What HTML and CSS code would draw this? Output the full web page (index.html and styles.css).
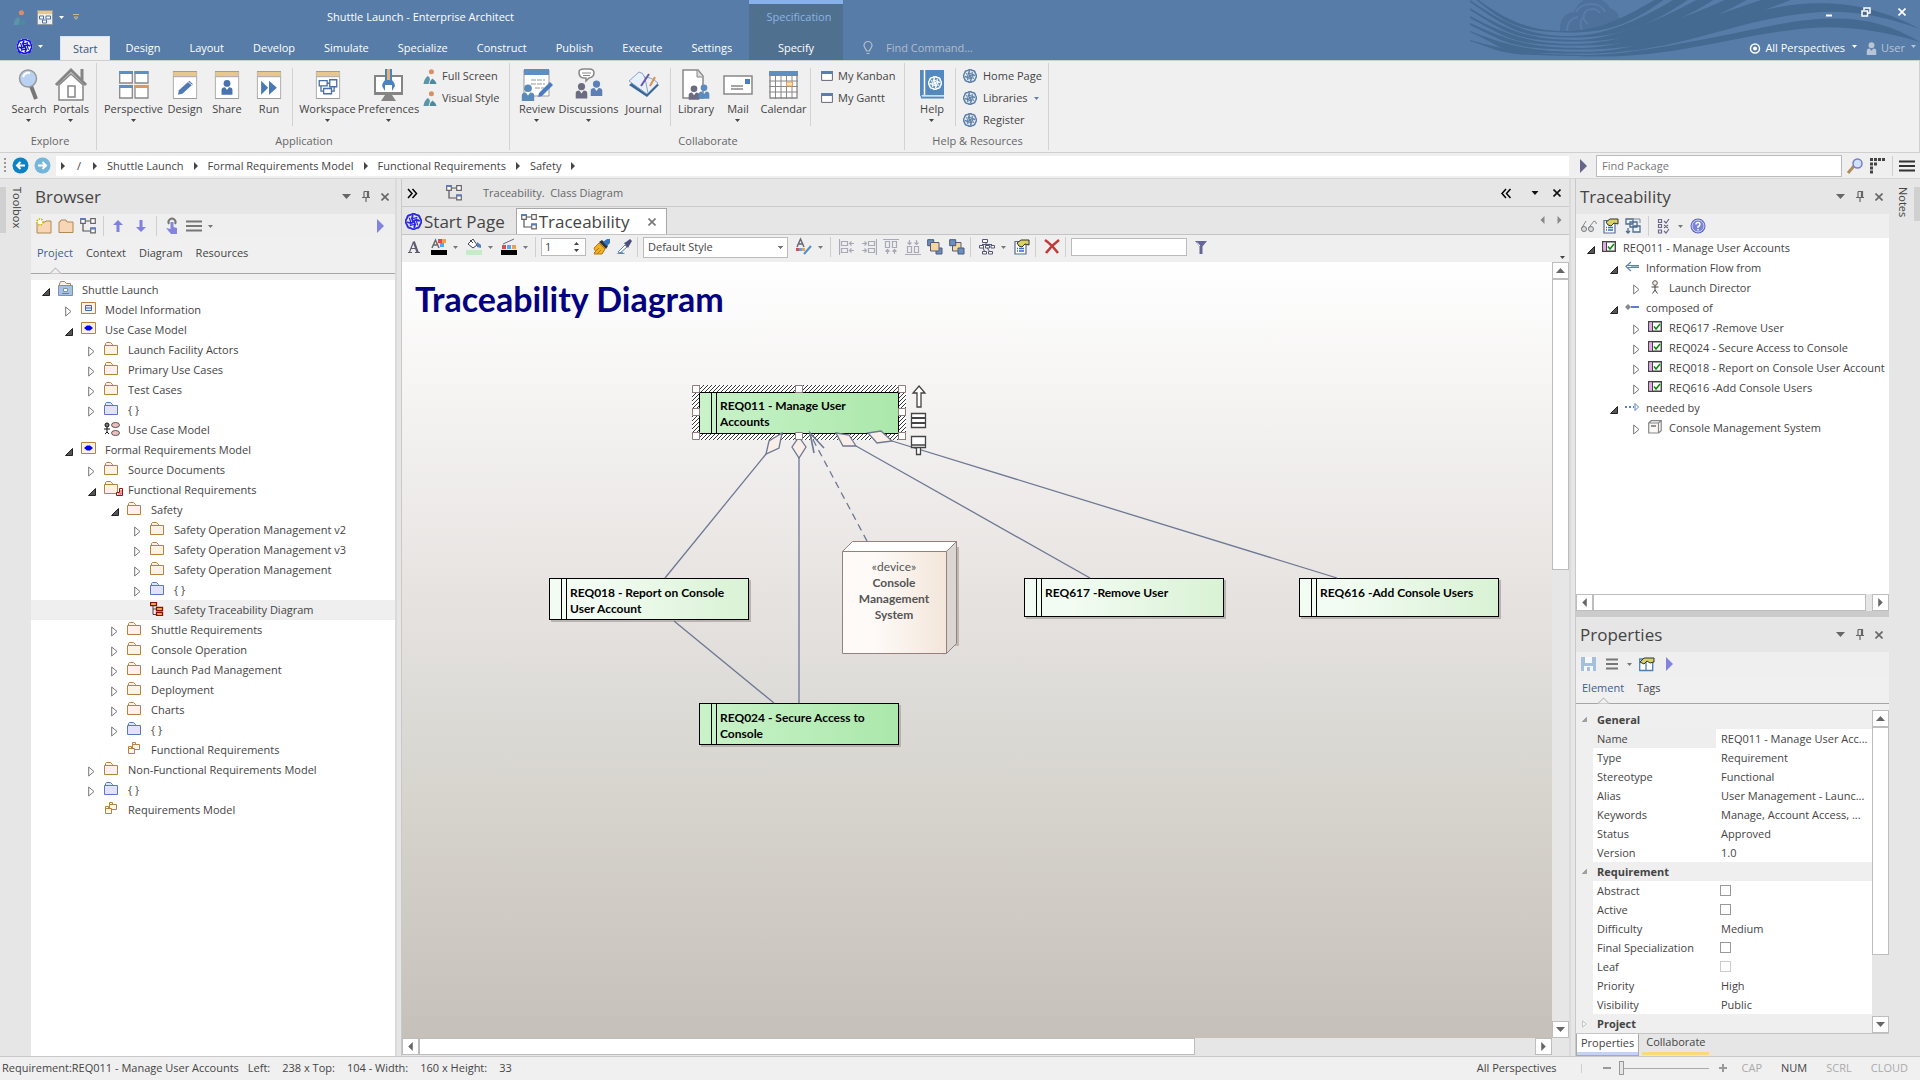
FILE: index.html
```html
<!DOCTYPE html>
<html lang="en">
<head>
<meta charset="utf-8">
<title>Shuttle Launch - Enterprise Architect</title>
<link rel="stylesheet" href="styles.css">
</head>
<body>
<svg class="sprite" aria-hidden="true">
  <symbol id="caret" viewBox="0 0 7 4"><path d="M0 0h7L3.500 4z" fill="currentColor"/></symbol>
  <symbol id="right" viewBox="0 0 5 10"><path d="M0 0l5 5-5 5z" fill="currentColor"/></symbol>
  <symbol id="left" viewBox="0 0 5 10"><path d="M5 0L0 5l5 5z" fill="currentColor"/></symbol>
  <symbol id="up" viewBox="0 0 9 5"><path d="M0 5h9L4.500 0z" fill="currentColor"/></symbol>
  <symbol id="down" viewBox="0 0 9 5"><path d="M0 0h9L4.500 5z" fill="currentColor"/></symbol>
  <symbol id="x" viewBox="0 0 8 8"><path d="M.5.5l7 7M7.500.5l-7 7" stroke="currentColor" stroke-width="1.600"/></symbol>
  <symbol id="pin" viewBox="0 0 8 11"><path d="M2 .5h4.500v5.500M2 .5V6M5.500.5V6M0 6.500h8M4 7v4" fill="none" stroke="currentColor" stroke-width="1.200"/></symbol>
  <symbol id="open" viewBox="0 0 8 8"><path d="M7.500.5v7h-7z" fill="#555" stroke="#222"/></symbol>
  <symbol id="closed" viewBox="0 0 7 11"><path d="M.7 1v9l5.300-4.500z" fill="#fff" stroke="#777"/></symbol>
  <symbol id="lines" viewBox="0 0 16 12"><path d="M0 1.500h16M0 6h16M0 10.500h16" stroke="currentColor" stroke-width="2"/></symbol>
  <symbol id="folder" viewBox="0 0 14 13"><path d="M.5 12.500v-9h1v-2l1-1h4l2 2v1h5v9z" fill="#fdf1ea" stroke="#b5823f"/><path d="M1 3.500h12" stroke="#b5823f"/></symbol>
  <symbol id="nsfolder" viewBox="0 0 14 13"><path d="M.5 12.500v-9h1v-2l1-1h4l2 2v1h5v9z" fill="#e2e2fb" stroke="#5778c4"/><path d="M1 3.500h12" stroke="#5778c4"/></symbol>
  <symbol id="redfolder" viewBox="0 0 20 15"><path d="M.5 12.500v-9h1v-2l1-1h4l2 2v1h5v9z" fill="#fdf1ea" stroke="#b5823f"/><path d="M1 3.500h12" stroke="#b5823f"/><path d="M15.500 7.500h3v7h-6v-3h3z" fill="#fff" stroke="#8c1414"/><path d="M17 9v4.500M14 13h3" stroke="#e33"/></symbol>
  <symbol id="root" viewBox="0 0 15 15"><path d="M1.500 5V3l1-2.500h4l2 2h4v3" fill="#fdf1ea" stroke="#b5823f"/><path d="M.5 4.500h14v10H.5z" fill="#a9c1dc" stroke="#7393ba"/><path d="M5.500 7.500h4v3h-4z" fill="#fff" stroke="#7393ba"/><path d="M4 12.500h7" stroke="#5f82ad"/></symbol>
  <symbol id="infopkg" viewBox="0 0 15 13"><path d="M.5.5h14v11H.5z" fill="#fdf1ea" stroke="#b5823f"/><path d="M4.500 3.500h6v5h-6zM4.500 6h6" fill="#e8ecfa" stroke="#4763ab"/></symbol>
  <symbol id="usepkg" viewBox="0 0 15 13"><path d="M.5.5h14v11H.5z" fill="#fdf1ea" stroke="#b5823f"/><path d="M3 6l3-2.500h3L12 6 9 8.500H6z" fill="#0000f0"/></symbol>
  <symbol id="ucdia" viewBox="0 0 16 14"><circle cx="3" cy="3" r="2" fill="#777" stroke="#111"/><path d="M3 5v5M0 7h6M3 10l-2 2M3 10l2 2" stroke="#111"/><ellipse cx="11.500" cy="3" rx="4" ry="2.500" fill="#edc0c0" stroke="#333" stroke-width=".8"/><ellipse cx="11.500" cy="11" rx="4" ry="2.500" fill="#edc0c0" stroke="#333" stroke-width=".8"/></symbol>
  <symbol id="tracedia" viewBox="0 0 14 14"><path d="M3 4v8.500h4M3 7h4" fill="none" stroke="#444"/><path d="M.5.500h6v3h-6zM6.500 5.500h6v3h-6zM6.500 10.500h6v3h-6z" fill="#ffe35a" stroke="#8c0c0c" stroke-width="1.300"/></symbol>
  <symbol id="pkgdia" viewBox="0 0 14 13"><path d="M5.500 2.500h7v5h-7zM5.500.5h3v2h-3z" fill="#fff8f2" stroke="#b5823f"/><path d="M1.500 6.500h6v5h-6zM1.500 4.500h3v2h-3z" fill="#fff8f2" stroke="#b5823f"/></symbol>
  <symbol id="req" viewBox="0 0 14 11"><path d="M.7.700h12.600v9.600H.7z" fill="#fff" stroke="#444" stroke-width="1.400"/><path d="M1.400 1.400H4v8.200H1.400z" fill="#e9a5e9"/><path d="M4.500 1v9" stroke="#444"/><path d="M6 5.500l2 2.500 4-5" fill="none" stroke="#0a8a0a" stroke-width="1.500"/></symbol>
  <symbol id="flow" viewBox="0 0 14 11"><path d="M14 4v3H6v-3z" fill="#9db7dc"/><path d="M6 1L1 5.500 6 10M1 4.500h13M3 6.500h11" fill="none" stroke="#5b7fc0" stroke-width="1.200"/></symbol>
  <symbol id="actor" viewBox="0 0 14 14"><circle cx="7" cy="3" r="2.300" fill="#fdf1ea" stroke="#555"/><path d="M7 5.500V10M3.500 7h7M7 10l-2.500 3.500M7 10l2.500 3.500" stroke="#444" fill="none"/></symbol>
  <symbol id="comp" viewBox="0 0 14 8"><path d="M6 4h8" stroke="#5b7fd0" stroke-width="2"/><path d="M0 4l3-3 3 3-3 3z" fill="#888"/></symbol>
  <symbol id="need" viewBox="0 0 14 8"><path d="M0 4h9" stroke="#5b7fd0" stroke-width="2" stroke-dasharray="2 2"/><path d="M10 .5v7L13.500 4z" fill="#fff" stroke="#5b7fd0"/></symbol>
  <symbol id="cube" viewBox="0 0 14 14"><path d="M.7 3h9.800v10H.7zM.7 3l2.500-2.300h10l-2.700 2.300M13.200.7v10l-2.700 2.300" fill="#faf7f5" stroke="#888" stroke-width="1.200"/><path d="M3 6h5" stroke="#777" stroke-width="1.600"/></symbol>
  <symbol id="knot" viewBox="0 0 16 16"><g fill="none" stroke="currentColor"><path d="M5.500 1.800Q8-.3 10.500 1.800 13.700 1.700 14.200 5 16.500 8 14.200 11 13.700 14.300 10.500 14.200 8 16.300 5.500 14.200 2.300 14.300 1.800 11-.5 8 1.800 5 2.300 1.700 5.500 1.800z" stroke-width="1.700"/><path d="M8 8Q5.500 6.500 7.500 2M8 8q1.500-2.500 6-.5M8 8q2.500 1.500.5 6M8 8q-1.500 2.500-6 .5" stroke-width="1.700"/><path d="M4 4.500Q5.500 7 5 11M11.500 4q-2.500 1.500-6 1M12 11.500Q10.500 9 11 5M4.500 12q2.500-1.500 6-1" stroke-width="1.200"/></g></symbol>
  <symbol id="people" viewBox="0 0 14 16"><circle cx="8.500" cy="3" r="2.700" fill="#d98e68"/><path d="M0 16q1-6 4.500-8.500Q6.500 8 7 11l-1.500 5z" fill="#5b96a8"/><path d="M6.500 16q.5-4 3-6 3.500 2 4.500 6z" fill="#4e8a9e"/></symbol>
  <symbol id="win" viewBox="0 0 28 32"><path d="M.5.500h27v31H.5z" fill="#fff" stroke="#8a8a8a"/><path d="M1 1h26v5H1z" fill="#e6c78d"/><path d="M1 6.500h26" stroke="#999"/></symbol>
  <symbol id="classdia" viewBox="0 0 16 16"><path d="M5 3h6M3 6v7h7" fill="none" stroke="#555" stroke-width="1.200"/><path d="M.7.700h4.600v4.600H.7zM10.700.7h4.600v4.600h-4.600zM10.700 10.200h4.600v4.600h-4.600z" fill="#fff" stroke="#666" stroke-width="1.200"/><path d="M0 1h6" stroke="#5a7cc0" stroke-width="2"/><path d="M10 10.500h6" stroke="#5a7cc0" stroke-width="2"/></symbol>
  <symbol id="hand" viewBox="0 0 16 16"><path d="M1 2.500h11v12.500H1z" fill="#fff" stroke="#5a6a8c" stroke-width="1.200"/><path d="M3 4l4-3h8v5l-4-1-3 3-3-1z" fill="#d8d264" stroke="#333"/><path d="M3 9.500h1M5 9.500h5M3 12h1M5 12h5" stroke="#3868c8" stroke-width="1.300"/></symbol>
  <symbol id="alignl" viewBox="0 0 16 16"><path d="M.5 0v16M2.500 2.500h6v4h-6zM2.500 9.500h6v4h-6zM10 4.500h5M10 11.500h5M12.500 2.500l-2 2 2 2M12.500 9.500l-2 2 2 2" fill="none" stroke="#aaa9b8" stroke-width="1.200"/></symbol>
  <symbol id="man" viewBox="0 0 18 22"><circle cx="9" cy="5.500" r="5" fill="currentColor"/><path d="M1 22V15q0-4 5-4l3 4 3-4q5 0 5 4v7z" fill="currentColor"/></symbol>
</svg>

<header class="titlebar">
  <svg class="waves" viewBox="0 0 450 60" aria-hidden="true">
    <g fill="#4d719a"><path d="M90 31q-1-17 14-19Q110-2 122-2t18 10q10 4 9 12L128 31z"/></g>
    <g fill="none" stroke="#567ca7" stroke-width="2"><path d="M97 31q0-12 11-14M106 12q4-8 15-8t14 8"/><path d="M118 24q-8-6-2-13 9-5 14 2M112 30q-4-9 2-13"/></g>
    <g fill="#446a92">
      <path d="M6-2C40 24 65 31 96 31S150 20 190-3l8 0C160 24 140 33 96 32.500S38 26 4-2z"/>
      <path d="M0 0C40 28 65 36 100 36S170 20 208-3l14 0C180 26 150 38 100 37.500S40 30 0 2z"/>
      <path d="M0 8C40 33 65 40 104 40S190 20 232-3l16 0C200 28 160 42 104 41.500S40 35 0 10z"/>
      <path d="M0 16C40 37 65 44 106 44S200 24 262-3l20 0C220 32 170 46 106 45.500S40 39 0 18z"/>
      <path d="M0 23C40 42 65 48 110 48S220 24 300-3l28 0C240 32 180 50 110 49.500S40 44 0 25z"/>
      <path d="M0 31C40 47 65 52 114 52S220 30 270 16s110-24 180 13q-60-22-110-16c-80 7-130 40.500-226 40.500S40 49 0 32z"/>
      <path d="M0 40C40 52 75 55 118 55S230 40 300 26 410 18 450 42q-60-18-110-14c-80 7-130 30-222 28.500S40 54 0 41z"/>
    </g>
  </svg>
  <div class="tb-left">
    <div class="caption">
      <div class="quick">
        <svg width="14" height="15"><use href="#people"/></svg>
        <svg class="qw" width="16" height="15" viewBox="0 0 16 15"><path d="M.5.500h15v14H.5z" fill="#eee" stroke="#999"/><path d="M1 1h14v3H1z" fill="#e6c78d"/><path d="M2.500 6h4v3h-4zM9 6h4.500v3H9zM5.500 10h4v3h-4z" fill="#fff" stroke="#4a6fa5"/></svg>
        <svg width="5" height="3"><use href="#caret"/></svg>
        <svg class="more" width="6" height="6" viewBox="0 0 6 6"><path d="M0 .5h6M1 3h4L3 5.500z" stroke="#c9b892" fill="none"/></svg>
      </div>
      <div class="apptitle">Shuttle Launch - Enterprise Architect</div>
    </div>
    <nav class="tabs">
      <button class="appbtn" aria-label="Application menu"><svg width="17" height="17" viewBox="0 0 17 17"><circle cx="8.500" cy="8.500" r="8" fill="#fff"/><use href="#knot" color="#1414e6" x="0.500" y="0.500" width="16" height="16"/></svg><svg width="5" height="3"><use href="#caret"/></svg></button>
      <button class="tab on">Start</button><button class="tab">Design</button><button class="tab">Layout</button><button class="tab">Develop</button><button class="tab">Simulate</button><button class="tab">Specialize</button><button class="tab">Construct</button><button class="tab">Publish</button><button class="tab">Execute</button><button class="tab">Settings</button>
    </nav>
  </div>
  <div class="spec"><span>Specification</span><button class="tab">Specify</button></div>
  <div class="tb-right">
    <div class="winctl">
      <button aria-label="Minimize"><svg width="10" height="10"><path d="M2 8.500h6" stroke="#fff" stroke-width="2"/></svg></button>
      <button aria-label="Restore"><svg width="10" height="10" viewBox="0 0 10 10"><path d="M3 3V1h6v5H7M1 4h5.500v5H1z" fill="none" stroke="#fff" stroke-width="1.500"/></svg></button>
      <button aria-label="Close"><svg width="8" height="8"><use href="#x"/></svg></button>
    </div>
    <div class="findrow">
      <svg width="10" height="14" viewBox="0 0 10 14"><path d="M3.500 10c0-2-2.500-3-2.500-5.500a4 4 0 018 0C9 7 6.500 8 6.500 10zM3.500 12.500h3" fill="none" stroke="#b8bec8" stroke-width="1.200"/></svg>
      <span class="find">Find Command...</span>
      <span class="grow"></span>
      <svg width="12" height="11" viewBox="0 0 12 11"><circle cx="6" cy="5.500" r="4.500" fill="none" stroke="#fff" stroke-width="1.500"/><circle cx="6" cy="5.500" r="2" fill="#fff"/></svg>
      <button class="persp">All Perspectives <svg width="5" height="3"><use href="#caret"/></svg></button>
      <button class="user"><svg width="11" height="13"><use href="#man"/></svg>User <svg width="5" height="3"><use href="#caret"/></svg></button>
    </div>
  </div>
</header>

<section class="ribbon">
  <div class="group">
    <div class="items">
      <button class="big"><svg width="28" height="32" viewBox="0 0 28 32"><path d="M16 17l5 13" stroke="#777" stroke-width="4"/><circle cx="13" cy="9.500" r="8.500" fill="#b9d2f1" stroke="#999" stroke-width="1.500"/><path d="M8 8q2-5 7-4" stroke="#fff" stroke-width="2" fill="none"/></svg>Search<svg class="c" width="5" height="3"><use href="#caret"/></svg></button>
      <button class="big"><svg width="32" height="33" viewBox="0 0 32 33"><path d="M4 17v15h24V17L16 6z" fill="#fff" stroke="#858585" stroke-width="1.500"/><path d="M1 17L16 2l15 15" fill="none" stroke="#858585" stroke-width="3"/><path d="M27 1v11" stroke="#858585" stroke-width="3"/><path d="M13 18h7v11h-7z" fill="#fff" stroke="#858585" stroke-width="1.500"/></svg>Portals<svg class="c" width="5" height="3"><use href="#caret"/></svg></button>
    </div>
    <div class="gname">Explore</div>
  </div>
  <div class="group">
    <div class="items">
      <button class="big wide"><svg width="30" height="28" viewBox="0 0 30 28"><path d="M.7 1h12.600v11H.7zM16 1h13v11H16zM.7 15h12.600v12H.7zM16 15h13v12H16z" fill="#fff" stroke="#888" stroke-width="1.300"/><path d="M0 1.500h14M15.500 1.500h14M0 15.500h14" stroke="#5f8fc0" stroke-width="3"/><path d="M15.500 15.500h14" stroke="#d9995a" stroke-width="3"/></svg>Perspective<svg class="c" width="5" height="3"><use href="#caret"/></svg></button>
      <button class="big"><svg width="28" height="28" viewBox="0 0 28 32"><use href="#win" width="28" height="32"/><path d="M6 27l1-5 12-11 4 4-12 11z" fill="#5079b5"/><path d="M17 12l5 4" stroke="#fff"/></svg>Design</button>
      <button class="big"><svg width="28" height="28" viewBox="0 0 28 32"><use href="#win" width="28" height="32"/><use href="#man" x="7" y="9" width="14" height="19" color="#4a72ae"/></svg>Share</button>
      <button class="big"><svg width="28" height="28" viewBox="0 0 28 32"><use href="#win" width="28" height="32"/><path d="M5 11l8 8-8 8zM14 11l9 8-9 8z" fill="#4a78b5"/></svg>Run</button>
      <i class="sep"></i>
      <button class="big wide"><svg width="28" height="28" viewBox="0 0 28 32"><use href="#win" width="28" height="32"/><path d="M4 11h9v6H4zM16 10h8v8h-8zM9 20h9v6H9zM13 14h3M6 17v6h3M18 23h3v-5" fill="#fff" stroke="#4a6fa5" stroke-width="1.500"/></svg>Workspace<svg class="c" width="5" height="3"><use href="#caret"/></svg></button>
      <button class="big wide"><svg width="29" height="32" viewBox="0 0 29 32"><path d="M1 7h27v18H1z" fill="#fff" stroke="#858585" stroke-width="2"/><path d="M1 23h27v3H1zM11 26h7l4 6H7z" fill="#858585"/><path d="M11 0h7v11q3 3 3 6l-3 5v-6h-7v6l-3-5q0-3 3-6z" fill="#4a84c0"/><path d="M14.500 0v11" stroke="#e6b070" stroke-width="3"/></svg>Preferences<svg class="c" width="5" height="3"><use href="#caret"/></svg></button>
      <div class="small"><button><svg width="14" height="15"><use href="#people"/></svg>Full Screen</button><button><svg width="14" height="15"><use href="#people"/></svg>Visual Style</button></div>
    </div>
    <div class="gname">Application</div>
  </div>
  <div class="group">
    <div class="items">
      <button class="big"><svg width="32" height="32" viewBox="0 0 32 32"><path d="M3 1h25v26H3z" fill="#fff" stroke="#999"/><path d="M3 0h25v6H3z" fill="#5f8fc0"/><path d="M10 11h14M10 15h14M14 19h9" stroke="#bbb" stroke-width="1.500" stroke-dasharray="5 1"/><use href="#man" x="0" y="15" width="14" height="17" color="#5a8ab8"/><path d="M17 28l1-4 11-11 3 3-11 11z" fill="#4a7cc0"/></svg>Review<svg class="c" width="5" height="3"><use href="#caret"/></svg></button>
      <button class="big wide"><svg width="28" height="32" viewBox="0 0 28 32"><path d="M4 3q0-3 5-3h5q5 0 5 4t-5 5l-3 3v-3H9Q4 9 4 3z" fill="#fff" stroke="#888" stroke-width="1.500"/><path d="M7 4h9M8 6.500h7" stroke="#888"/><use href="#man" x="0" y="12" width="13" height="19" color="#6b6b82"/><use href="#man" x="15" y="9" width="13" height="20" color="#5b80b8"/></svg>Discussions<svg class="c" width="5" height="3"><use href="#caret"/></svg></button>
      <button class="big mid"><svg width="32" height="32" viewBox="0 0 32 32"><path d="M1 16l13-10 17 10-12 12z" fill="#376897"/><path d="M1 12L11 3q4 0 6 6 5-2 13 5L19 25z" fill="#eaf0fb" stroke="#8ba2c2"/><path d="M17 9l3 15" stroke="#8ba2c2"/><path d="M13 17l8-12" stroke="#6658a5" stroke-width="2"/><path d="M27 8l-5 9" stroke="#df9147" stroke-width="2"/></svg>Journal</button>
      <i class="sep"></i>
      <button class="big"><svg width="28" height="32" viewBox="0 0 28 32"><path d="M1 1h15l5 6v22H1z" fill="#fff" stroke="#888" stroke-width="1.500"/><path d="M15 1v7h6" fill="#ddd" stroke="#888"/><use href="#man" x="6" y="15" width="12" height="17" color="#6b6b82"/><use href="#man" x="16" y="14" width="12" height="17" color="#5a8ac0"/></svg>Library</button>
      <button class="big"><svg width="30" height="20" viewBox="0 0 30 20"><path d="M1 1h28v18H1z" fill="#fff" stroke="#888" stroke-width="1.500"/><path d="M22 4h5v5h-5z" fill="#4a80c0"/><path d="M8 11h12M8 14h12" stroke="#888" stroke-width="1.500"/></svg>Mail<svg class="c" width="5" height="3"><use href="#caret"/></svg></button>
      <button class="big mid"><svg width="29" height="28" viewBox="0 0 29 28"><path d="M1 1h27v26H1z" fill="#fff" stroke="#888" stroke-width="1.300"/><path d="M0 0h29v5H0z" fill="#5f8fc0"/><path d="M6.500 5v23M12 5v23M17.500 5v23M23 5v23M0 10h29M0 15.500h29M0 21h29" stroke="#888"/><path d="M17.500 11h6v4h-6z" fill="#ffe0b0" stroke="#e8a060"/></svg>Calendar</button>
      <i class="sep"></i>
      <div class="small kan"><button><svg width="12" height="10" viewBox="0 0 12 10"><path d="M.6.600h10.800v8.800H.6z" fill="#fff" stroke="#667"/><path d="M0 0h12v3H0z" fill="#5b7fa8"/></svg>My Kanban</button><button><svg width="12" height="10" viewBox="0 0 12 10"><path d="M.6.600h10.800v8.800H.6z" fill="#fff" stroke="#667"/><path d="M0 0h12v3H0z" fill="#5b7fa8"/></svg>My Gantt</button></div>
    </div>
    <div class="gname">Collaborate</div>
  </div>
  <div class="group">
    <div class="items">
      <button class="big"><svg width="24" height="29" viewBox="0 0 24 29"><path d="M0 0h24v25H3q-3 0-3 3z" fill="#5389bf"/><path d="M4.500 0v25" stroke="#fff" stroke-width="1.500"/><path d="M1 27h23" stroke="#5389bf" stroke-width="3"/><path d="M2 26h22" stroke="#fff"/><use href="#knot" x="8" y="6" width="14" height="14" color="#fff"/></svg>Help<svg class="c" width="5" height="3"><use href="#caret"/></svg></button>
      <i class="sep"></i>
      <div class="small res"><button><svg width="14" height="14"><use href="#knot"/></svg>Home Page</button><button><svg width="14" height="14"><use href="#knot"/></svg>Libraries<svg width="5" height="3"><use href="#caret" color="#444"/></svg></button><button><svg width="14" height="14"><use href="#knot"/></svg>Register</button></div>
    </div>
    <div class="gname">Help &amp; Resources</div>
  </div>
</section>

<nav class="navbar">
  <i class="grip"></i>
  <button class="round" aria-label="Back"><svg width="17" height="17" viewBox="0 0 17 17"><circle cx="8.500" cy="8.500" r="8" fill="#0a82c4"/><path d="M13 8.500H5M8.500 5L5 8.500 8.500 12" stroke="#fff" stroke-width="2" fill="none"/></svg></button>
  <button class="round" aria-label="Forward"><svg width="17" height="17" viewBox="0 0 17 17"><circle cx="8.500" cy="8.500" r="8" fill="#74b5da"/><path d="M4 8.500h8M8.500 5l3.500 3.500L8.500 12" stroke="#fff" stroke-width="2" fill="none"/></svg></button>
  <div class="crumbs">
    <svg width="4" height="8"><use href="#right"/></svg><a class="rootlink" href="#">/</a><svg width="4" height="8"><use href="#right"/></svg><a href="#">Shuttle Launch</a><svg width="4" height="8"><use href="#right"/></svg><a href="#">Formal Requirements Model</a><svg width="4" height="8"><use href="#right"/></svg><a href="#">Functional Requirements</a><svg width="4" height="8"><use href="#right"/></svg><a href="#">Safety</a><svg width="4" height="8"><use href="#right"/></svg>
  </div>
  <svg class="go" width="7" height="14"><use href="#right"/></svg>
  <input class="findpkg" placeholder="Find Package" aria-label="Find Package">
  <svg width="16" height="16" viewBox="0 0 16 16"><path d="M1 15l6-7" stroke="#b08d5c" stroke-width="3"/><circle cx="10.500" cy="5.500" r="4.500" fill="#cfe2fb" stroke="#7c7cc4" stroke-width="1.500"/></svg>
  <svg width="15" height="15" viewBox="0 0 15 15"><path d="M0 1.500h15M0 6h8M0 10h3M0 14h3" stroke="#444" stroke-width="3" stroke-dasharray="3 1"/></svg>
  <i class="vs"></i>
  <svg class="dark" width="16" height="12"><use href="#lines"/></svg>
</nav>

<main class="work">
  <aside class="side"><i class="mark"></i><span>Toolbox</span></aside>

  <section class="panel browser">
    <div class="phead"><h2>Browser</h2><svg width="9" height="5"><use href="#down"/></svg><svg width="8" height="11"><use href="#pin"/></svg><svg width="8" height="8"><use href="#x"/></svg></div>
    <div class="ptools">
      <svg width="16" height="16" viewBox="0 0 16 16"><path d="M1 15V4h8l1-1h5v12z" fill="#f8d5b4" stroke="#b08850"/><circle cx="4" cy="4" r="3" fill="#fff" stroke="#c8b400" stroke-width="1.500" stroke-dasharray="1.500 1"/></svg>
      <svg class="g6" width="16" height="16" viewBox="0 0 16 16"><path d="M1 14.500V4h1l1-2h5l1 2h6v10.500z" fill="#f8d5b4" stroke="#b08850"/></svg>
      <svg class="g6" width="16" height="16"><use href="#classdia"/></svg>
      <i class="vs"></i>
      <svg width="10" height="12" viewBox="0 0 10 12"><path d="M5 0l5 5H6.500v7h-3V5H0z" fill="#8080e0"/></svg>
      <svg class="arr" width="10" height="12" viewBox="0 0 10 12"><path d="M5 12l5-5H6.500V0h-3v7H0z" fill="#8080e0"/></svg>
      <i class="vs"></i>
      <svg width="12" height="16" viewBox="0 0 12 16"><path d="M3 6a3.500 3.500 0 116 0" fill="none" stroke="#777" stroke-width="2"/><path d="M4.500 4h3v5l3.500 1v6H5L0 10l4.500 1z" fill="#8585dd"/></svg>
      <svg class="menu" width="16" height="12"><use href="#lines"/></svg><svg class="c" width="5" height="3"><use href="#caret"/></svg>
      <span class="grow"></span><svg class="play" width="7" height="14"><use href="#right"/></svg>
    </div>
    <div class="ptabs"><button class="on">Project</button><button>Context</button><button>Diagram</button><button>Resources</button></div>
    <ul class="tree">
      <li class="l0"><b><svg width="8" height="8"><use href="#open"/></svg></b><em><svg width="15" height="15"><use href="#root"/></svg></em>Shuttle Launch</li>
      <li class="l1"><b><svg width="7" height="11"><use href="#closed"/></svg></b><em><svg width="15" height="13"><use href="#infopkg"/></svg></em>Model Information</li>
      <li class="l1"><b><svg width="8" height="8"><use href="#open"/></svg></b><em><svg width="15" height="13"><use href="#usepkg"/></svg></em>Use Case Model</li>
      <li class="l2"><b><svg width="7" height="11"><use href="#closed"/></svg></b><em><svg width="14" height="13"><use href="#folder"/></svg></em>Launch Facility Actors</li>
      <li class="l2"><b><svg width="7" height="11"><use href="#closed"/></svg></b><em><svg width="14" height="13"><use href="#folder"/></svg></em>Primary Use Cases</li>
      <li class="l2"><b><svg width="7" height="11"><use href="#closed"/></svg></b><em><svg width="14" height="13"><use href="#folder"/></svg></em>Test Cases</li>
      <li class="l2"><b><svg width="7" height="11"><use href="#closed"/></svg></b><em><svg width="14" height="13"><use href="#nsfolder"/></svg></em>{ }</li>
      <li class="l2"><b></b><em><svg width="16" height="14"><use href="#ucdia"/></svg></em>Use Case Model</li>
      <li class="l1"><b><svg width="8" height="8"><use href="#open"/></svg></b><em><svg width="15" height="13"><use href="#usepkg"/></svg></em>Formal Requirements Model</li>
      <li class="l2"><b><svg width="7" height="11"><use href="#closed"/></svg></b><em><svg width="14" height="13"><use href="#folder"/></svg></em>Source Documents</li>
      <li class="l2"><b><svg width="8" height="8"><use href="#open"/></svg></b><em><svg width="20" height="15"><use href="#redfolder"/></svg></em>Functional Requirements</li>
      <li class="l3"><b><svg width="8" height="8"><use href="#open"/></svg></b><em><svg width="14" height="13"><use href="#folder"/></svg></em>Safety</li>
      <li class="l4"><b><svg width="7" height="11"><use href="#closed"/></svg></b><em><svg width="14" height="13"><use href="#folder"/></svg></em>Safety Operation Management v2</li>
      <li class="l4"><b><svg width="7" height="11"><use href="#closed"/></svg></b><em><svg width="14" height="13"><use href="#folder"/></svg></em>Safety Operation Management v3</li>
      <li class="l4"><b><svg width="7" height="11"><use href="#closed"/></svg></b><em><svg width="14" height="13"><use href="#folder"/></svg></em>Safety Operation Management</li>
      <li class="l4"><b><svg width="7" height="11"><use href="#closed"/></svg></b><em><svg width="14" height="13"><use href="#nsfolder"/></svg></em>{ }</li>
      <li class="l4 sel"><b></b><em><svg width="14" height="14"><use href="#tracedia"/></svg></em>Safety Traceability Diagram</li>
      <li class="l3"><b><svg width="7" height="11"><use href="#closed"/></svg></b><em><svg width="14" height="13"><use href="#folder"/></svg></em>Shuttle Requirements</li>
      <li class="l3"><b><svg width="7" height="11"><use href="#closed"/></svg></b><em><svg width="14" height="13"><use href="#folder"/></svg></em>Console Operation</li>
      <li class="l3"><b><svg width="7" height="11"><use href="#closed"/></svg></b><em><svg width="14" height="13"><use href="#folder"/></svg></em>Launch Pad Management</li>
      <li class="l3"><b><svg width="7" height="11"><use href="#closed"/></svg></b><em><svg width="14" height="13"><use href="#folder"/></svg></em>Deployment</li>
      <li class="l3"><b><svg width="7" height="11"><use href="#closed"/></svg></b><em><svg width="14" height="13"><use href="#folder"/></svg></em>Charts</li>
      <li class="l3"><b><svg width="7" height="11"><use href="#closed"/></svg></b><em><svg width="14" height="13"><use href="#nsfolder"/></svg></em>{ }</li>
      <li class="l3"><b></b><em><svg width="14" height="13"><use href="#pkgdia"/></svg></em>Functional Requirements</li>
      <li class="l2"><b><svg width="7" height="11"><use href="#closed"/></svg></b><em><svg width="14" height="13"><use href="#folder"/></svg></em>Non-Functional Requirements Model</li>
      <li class="l2"><b><svg width="7" height="11"><use href="#closed"/></svg></b><em><svg width="14" height="13"><use href="#nsfolder"/></svg></em>{ }</li>
      <li class="l2"><b></b><em><svg width="14" height="13"><use href="#pkgdia"/></svg></em>Requirements Model</li>
    </ul>
  </section>
  <i class="split"></i>

  <section class="center">
    <div class="dhead">
      <svg width="9" height="9" viewBox="0 0 9 9"><path d="M0 0l4 4.500L0 9M4.500 0l4 4.500-4 4.500" fill="none" stroke="#000" stroke-width="1.500"/></svg>
      <svg class="dicon" width="16" height="16"><use href="#classdia"/></svg>
      <span>Traceability.&nbsp; Class Diagram</span><span class="grow"></span>
      <svg width="9" height="9" viewBox="0 0 9 9"><path d="M4 0L0 4.500 4 9M8.500 0l-4 4.500 4 4.500" fill="none" stroke="#000" stroke-width="1.500"/></svg>
      <svg class="k" width="8" height="4"><use href="#caret"/></svg><svg class="k" width="8" height="8"><use href="#x"/></svg>
    </div>
    <div class="dtabs">
      <button><svg width="17" height="17"><use href="#knot" color="#2a2ae0"/></svg>Start Page</button>
      <button class="on"><svg width="16" height="16"><use href="#classdia"/></svg>Traceability<svg class="cl" width="8" height="8"><use href="#x"/></svg></button>
      <span class="grow"></span>
      <svg width="5" height="8"><use href="#left"/></svg><svg class="sc" width="5" height="8"><use href="#right"/></svg>
    </div>
    <div class="dtools">
      <button aria-label="Font" class="t a"><svg width="12" height="12" viewBox="0 0 12 12"><path d="M1.500 11L5.500 1M3 7.500h5M0 11.500h4M7 11.500h5" fill="none" stroke="#5e5a70" stroke-width="1.200"/><path d="M5.700 0.500l4 11" stroke="#5e5a70" stroke-width="2.200"/></svg></button>
      <div class="pair"><button aria-label="Text colour" class="t"><svg width="16" height="16" viewBox="0 0 16 16"><path d="M1 9L4.500 1 8 9M2 6h5" fill="none" stroke="#667" stroke-width="1.500"/><path d="M7 0h4v4H7z" fill="#e04a4a"/><path d="M11 0h4v4h-4z" fill="#f0a050"/><path d="M9 4h4v4H9z" fill="#50a8f0"/><path d="M0 11h16v5H0z"/></svg></button><button aria-label="More" class="cr"><svg width="5" height="3"><use href="#caret"/></svg></button></div>
      <div class="pair"><button aria-label="Fill colour" class="t"><svg width="16" height="16" viewBox="0 0 16 16"><path d="M2 5l5-5 4 6-4 3zM4 1l3 3" fill="#fff" stroke="#445"/><path d="M11 3v5l4 1v-3z" fill="#5080c0"/><path d="M0 11h16v5H0z" fill="#c5ecc5"/></svg></button><button aria-label="More" class="cr"><svg width="5" height="3"><use href="#caret"/></svg></button></div>
      <div class="pair"><button aria-label="Line colour" class="t"><svg width="16" height="16" viewBox="0 0 16 16"><path d="M2 5L13 0" stroke="#667"/><path d="M1 6h4v4H1z" fill="#e04a4a"/><path d="M6 6h4v4H6z" fill="#50a8f0"/><path d="M11 6h4v4h-4z" fill="#f0a050"/><path d="M0 11h16v5H0z"/></svg></button><button aria-label="More" class="cr"><svg width="5" height="3"><use href="#caret"/></svg></button></div>
      <i class="vs"></i>
      <label class="spin"><input value="1" aria-label="Line width"><svg width="5" height="10" viewBox="0 0 5 10"><path d="M0 3h5L2.500 0zM0 7h5l-2.500 3z" fill="#444"/></svg></label>
      <button aria-label="Apply style" class="t"><svg width="16" height="16" viewBox="0 0 16 16"><path d="M0 9l5-5 6 6-3 5H0q3-2 0-6z" fill="#f0b020" stroke="#b87810"/><path d="M0 14l5-5M3 15l4-4" stroke="#b87810"/><path d="M5 3l7 7 2-3-6-6z" fill="#333"/><path d="M9 3l4-3h3v4l-3 3z" fill="#3474c0"/></svg></button>
      <button aria-label="Pick style" class="t"><svg width="16" height="16" viewBox="0 0 16 16"><path d="M2 13L9 6l2 2-7 6z" fill="#fff" stroke="#778"/><path d="M8 4l4 5 1-2 3-5-2-2-4 3z" fill="#4b4f80"/><path d="M0 15h9l-3-2z" fill="#4090d0"/></svg></button>
      <i class="vs"></i>
      <select class="style" aria-label="Diagram style"><option>Default Style</option></select>
      <div class="pair"><button aria-label="Style" class="t"><svg width="16" height="16" viewBox="0 0 16 16"><path d="M1 8L4.500 0 8 8M2 5h5" fill="none" stroke="#667" stroke-width="1.500"/><path d="M0 9h3v3H0z" fill="#e04a4a"/><path d="M3 9h3v3H3z" fill="#50a8f0"/><path d="M6 9h3v3H6z" fill="#f0a050"/><path d="M8 15l7-8" stroke="#5090d0" stroke-width="2"/></svg></button><button aria-label="More" class="cr"><svg width="5" height="3"><use href="#caret"/></svg></button></div>
      <i class="vs"></i>
      <button aria-label="Align left" class="t"><svg width="16" height="16"><use href="#alignl"/></svg></button>
      <button aria-label="Align right" class="t"><svg width="16" height="16" viewBox="0 0 16 16"><use href="#alignl" transform="matrix(-1 0 0 1 16 0)"/></svg></button>
      <button aria-label="Align top" class="t"><svg width="16" height="16" viewBox="0 0 16 16"><use href="#alignl" transform="rotate(90 8 8)"/></svg></button>
      <button aria-label="Align bottom" class="t"><svg width="16" height="16" viewBox="0 0 16 16"><use href="#alignl" transform="rotate(-90 8 8)"/></svg></button>
      <button aria-label="Bring to front" class="t"><svg width="16" height="16" viewBox="0 0 16 16"><path d="M.7.700h6v6h-6zM9 9h6v6H9z" fill="#6b90c0" stroke="#4b5878"/><path d="M3.500 3.500h8.500v8.500H3.500z" fill="#f2d7a2" stroke="#5a5878"/></svg></button>
      <button aria-label="Send to back" class="t"><svg width="16" height="16" viewBox="0 0 16 16"><path d="M3.500 3.500h8.500v8.500H3.500z" fill="#f2d7a2" stroke="#5a5878"/><path d="M.7.700h6v6h-6zM9 9h6v6H9z" fill="#6b90c0" stroke="#4b5878"/></svg></button>
      <i class="vs"></i>
      <div class="pair"><button aria-label="Layout" class="t"><svg width="16" height="16" viewBox="0 0 16 16"><path d="M7 3v3M3 5.500h10M4 8.500L5.500 12.500M8 8.500l2.500 4" stroke="#55557a"/><path d="M3.500.5h5v3h-5zM.5 6.500h4v2.500h-4zM6.500 6.500h4v2.500h-4zM12 6.500h3.500v2.500H12zM3.500 12.500h4v2.500h-4zM9.500 12.500h4v2.500h-4z" fill="#fff" stroke="#55557a"/></svg></button><button aria-label="More" class="cr"><svg width="5" height="3"><use href="#caret"/></svg></button></div>
      <button aria-label="Properties" class="t"><svg width="16" height="16"><use href="#hand"/></svg></button>
      <i class="vs"></i>
      <button aria-label="Delete" class="t"><svg width="16" height="16" viewBox="0 0 16 16"><path d="M1 1q6 4 13 13M15 1Q7 7 2 14" stroke="#c03a3a" stroke-width="2.500" fill="none"/></svg></button>
      <i class="vs"></i>
      <input class="filter" aria-label="Filter">
      <button aria-label="Apply filter" class="t"><svg width="12" height="13" viewBox="0 0 12 13"><path d="M0 0h12L7.500 5.500V13h-3V5.500z" fill="#66669a"/><path d="M2 1.500l3 3.500" stroke="#fff"/></svg></button>
      <span class="grow"></span><svg class="ovf" width="5" height="3"><use href="#caret"/></svg>
    </div>
    <div class="view">
      <div class="canvas">
        <h1>Traceability Diagram</h1>
        <svg class="hatch" width="214" height="55"><defs><pattern id="hp" width="4" height="4" patternUnits="userSpaceOnUse"><path d="M-1 1l2-2M-1 5L5-1M3 5l2-2" stroke="#222" stroke-width=".9"/></pattern></defs><rect width="214" height="55" fill="#fff"/><rect width="214" height="55" fill="url(#hp)"/></svg>
        <div class="node strong n011"><p>REQ011 - Manage User<br>Accounts</p></div>
        <div class="node n018"><p>REQ018 - Report on Console<br>User Account</p></div>
        <div class="node strong n024"><p>REQ024 - Secure Access to<br>Console</p></div>
        <div class="node low n617"><p>REQ617 -Remove User</p></div>
        <div class="node low n616"><p>REQ616 -Add Console Users</p></div>
        <div class="device">
          <svg width="120" height="120" viewBox="0 0 120 120"><defs><linearGradient id="dg"><stop offset=".3" stop-color="#fefaf8"/><stop offset="1" stop-color="#f3e6da"/></linearGradient></defs><path d="M14 6h103v99l-9 0-6 9z" fill="#bdb8b4"/><path d="M10.500.5h104l-10 10H.5z" fill="#fff" stroke="#96807f"/><path d="M114.500.5v102l-10 10V10.500z" fill="#dcd6d2" stroke="#96807f"/><path d="M.5 10.500h104v102H.5z" fill="url(#dg)" stroke="#96807f"/></svg>
          <p>«device»<strong>Console<br>Management<br>System</strong></p>
        </div>
        <svg class="links" width="1100" height="460" viewBox="0 0 1100 460">
          <g fill="#f9eee8" stroke="#6d7892" stroke-width="1.300">
            <path d="M364 192L263 316M397 196v245M454 184l234 132M490 179l445 137M272 359l100 82"/>
            <path d="M465 279L408 172" stroke-dasharray="7 5"/><path d="M412 191l-4-20 14 15" fill="none" stroke-width="1.600"/>
            <path d="M380 171l-3 15-13 6 3-13zM397 175l7 10-7 11-7-11zM434 171l13 2 7 11-13 0zM466 171l13-2 11 10-15 2z"/>
          </g>
          <g fill="#fff" stroke="#8f7c7c">
            <path d="M290.500 123.500h7v7h-7zM393.500 123.500h7v7h-7zM496.500 123.500h7v7h-7zM290.500 146.500h7v7h-7zM496.500 146.500h7v7h-7zM290.500 170.500h7v7h-7zM393.500 170.500h7v7h-7zM496.500 170.500h7v7h-7z"/>
          </g>
          <g fill="#fff" stroke="#444" stroke-width="1.300">
            <path d="M517 124l6 7h-4v14h-4v-14h-4z"/><path d="M509.500 151.500h14v14h-14z"/><path d="M509 156h15M509 161h15" stroke-width="2"/><path d="M509.500 174.500h14v11h-14zM510 183h14M514.500 185.500h4v7h-4z"/>
          </g>
        </svg>
      </div>
      <div class="vscroll"><button aria-label="Up"><svg width="9" height="5"><use href="#up"/></svg></button><i class="thumb v1"></i><span class="grow"></span><button aria-label="Down"><svg width="9" height="5"><use href="#down"/></svg></button></div>
      <div class="hscroll"><button aria-label="Left"><svg width="5" height="9"><use href="#left"/></svg></button><div class="track"><i class="thumb h1"></i></div><button aria-label="Right"><svg width="5" height="9"><use href="#right"/></svg></button></div>
    </div>
  </section>
  <i class="split"></i>

  <div class="right">
    <section class="panel trace">
      <div class="phead"><h2>Traceability</h2><svg width="9" height="5"><use href="#down"/></svg><svg width="8" height="11"><use href="#pin"/></svg><svg width="8" height="8"><use href="#x"/></svg></div>
      <div class="ptools">
        <svg width="16" height="14" viewBox="0 0 16 14"><circle cx="3" cy="10" r="2.500" fill="#d9dde3" stroke="#777"/><circle cx="10" cy="10" r="2.500" fill="#d9dde3" stroke="#777"/><path d="M.7 9L5 2M7.500 9L13 2q2 0 2.500 3" fill="none" stroke="#888"/></svg>
        <svg class="g6" width="16" height="16"><use href="#hand"/></svg>
        <svg class="g6" width="16" height="16" viewBox="0 0 16 16"><path d="M1 1h7v5H1zM5 4h7v5H5zM8 8h7v6H8zM3 10v5M1 13l2 2 2-2" fill="#eef4fb" stroke="#4d6d90" stroke-width="1.300"/><path d="M1 1h14v4" fill="none" stroke="#789"/></svg>
        <i class="vs"></i>
        <svg width="12" height="15" viewBox="0 0 12 15"><path d="M.5.500h3v3h-3zM.5 5.500h3v3h-3zM.5 11h3v3h-3zM6 2l2 2 3-4M6 6l4 3M10 6L6 9M6 12l2 2 3-4" fill="none" stroke="#6a6886" stroke-width="1.200"/></svg>
        <svg class="c far" width="5" height="3"><use href="#caret"/></svg>
        <svg class="g6" width="16" height="16" viewBox="0 0 16 16"><circle cx="8" cy="8" r="7.500" fill="#5a62c4"/><circle cx="8" cy="8" r="6" fill="#7a84d4" stroke="#fff" stroke-width=".7"/><path d="M6 6.500Q6 4.500 8 4.500t2 2Q10 8 8 8.500V10M8 11v1.500" stroke="#fff" stroke-width="1.400" fill="none"/></svg>
      </div>
      <ul class="tree">
        <li class="l0"><b><svg width="8" height="8"><use href="#open"/></svg></b><em><svg width="14" height="11"><use href="#req"/></svg></em>REQ011 - Manage User Accounts</li>
        <li class="l1"><b><svg width="8" height="8"><use href="#open"/></svg></b><em><svg width="14" height="11"><use href="#flow"/></svg></em>Information Flow from</li>
        <li class="l2"><b><svg width="7" height="11"><use href="#closed"/></svg></b><em><svg width="14" height="14"><use href="#actor"/></svg></em>Launch Director</li>
        <li class="l1"><b><svg width="8" height="8"><use href="#open"/></svg></b><em><svg width="14" height="8"><use href="#comp"/></svg></em>composed of</li>
        <li class="l2"><b><svg width="7" height="11"><use href="#closed"/></svg></b><em><svg width="14" height="11"><use href="#req"/></svg></em>REQ617 -Remove User</li>
        <li class="l2"><b><svg width="7" height="11"><use href="#closed"/></svg></b><em><svg width="14" height="11"><use href="#req"/></svg></em>REQ024 - Secure Access to Console</li>
        <li class="l2"><b><svg width="7" height="11"><use href="#closed"/></svg></b><em><svg width="14" height="11"><use href="#req"/></svg></em>REQ018 - Report on Console User Account</li>
        <li class="l2"><b><svg width="7" height="11"><use href="#closed"/></svg></b><em><svg width="14" height="11"><use href="#req"/></svg></em>REQ616 -Add Console Users</li>
        <li class="l1"><b><svg width="8" height="8"><use href="#open"/></svg></b><em><svg width="14" height="8"><use href="#need"/></svg></em>needed by</li>
        <li class="l2"><b><svg width="7" height="11"><use href="#closed"/></svg></b><em><svg width="14" height="14"><use href="#cube"/></svg></em>Console Management System</li>
      </ul>
      <div class="hscroll"><button aria-label="Left"><svg width="5" height="9"><use href="#left"/></svg></button><div class="track"><i class="thumb h2"></i></div><button aria-label="Right"><svg width="5" height="9"><use href="#right"/></svg></button></div>
    </section>
    <section class="panel props">
      <div class="phead"><h2>Properties</h2><svg width="9" height="5"><use href="#down"/></svg><svg width="8" height="11"><use href="#pin"/></svg><svg width="8" height="8"><use href="#x"/></svg></div>
      <div class="ptools">
        <svg width="15" height="14" viewBox="0 0 15 14"><path d="M0 0h15v14H0z" fill="#a6bfdc"/><path d="M4 0h7v6H4zM3 9h9v5H3z" fill="#f4f7fb"/><path d="M6 10h3v4H6z" fill="#a6bfdc"/></svg>
        <svg class="menu2" width="12" height="12" viewBox="0 0 12 12"><path d="M0 1.500h12M0 6h12M0 10.500h12" stroke="currentColor" stroke-width="2"/></svg><svg class="c" width="5" height="3"><use href="#caret"/></svg>
        <svg class="g6" width="16" height="14" viewBox="0 0 16 14"><path d="M.7 2h13v11.500H.7zM7 2v11" fill="#fff" stroke="#4a80b8" stroke-width="1.300"/><path d="M1 5l4-4h10v4l-4 1-3-2-3 3z" fill="#d8d264" stroke="#333"/></svg>
        <svg class="play p2" width="7" height="14"><use href="#right"/></svg>
      </div>
      <div class="ptabs short"><button class="on">Element</button><button>Tags</button></div>
      <div class="pbody">
        <table class="ptable">
          <colgroup><col class="c1"><col class="c2"><col></colgroup>
          <tbody>
          <tr class="sec"><td class="gut"><svg width="5" height="5"><use href="#open"/></svg></td><th colspan="2">General</th></tr>
          <tr class="cur"><td class="gut"></td><th>Name</th><td>REQ011 - Manage User Acc...</td></tr>
          <tr><td class="gut"></td><th>Type</th><td>Requirement</td></tr>
          <tr><td class="gut"></td><th>Stereotype</th><td>Functional</td></tr>
          <tr><td class="gut"></td><th>Alias</th><td>User Management - Launc...</td></tr>
          <tr><td class="gut"></td><th>Keywords</th><td>Manage, Account Access, ...</td></tr>
          <tr><td class="gut"></td><th>Status</th><td>Approved</td></tr>
          <tr><td class="gut"></td><th>Version</th><td>1.0</td></tr>
          <tr class="sec"><td class="gut"><svg width="5" height="5"><use href="#open"/></svg></td><th colspan="2">Requirement</th></tr>
          <tr><td class="gut"></td><th><label for="p1">Abstract</label></th><td><input type="checkbox" id="p1"></td></tr>
          <tr><td class="gut"></td><th><label for="p2">Active</label></th><td><input type="checkbox" id="p2"></td></tr>
          <tr><td class="gut"></td><th>Difficulty</th><td>Medium</td></tr>
          <tr><td class="gut"></td><th><label for="p3">Final Specialization</label></th><td><input type="checkbox" id="p3"></td></tr>
          <tr><td class="gut"></td><th><label for="p4">Leaf</label></th><td><input type="checkbox" id="p4" disabled></td></tr>
          <tr><td class="gut"></td><th>Priority</th><td>High</td></tr>
          <tr><td class="gut"></td><th>Visibility</th><td>Public</td></tr>
          <tr class="sec"><td class="gut"><svg width="5" height="8"><use href="#closed"/></svg></td><th colspan="2">Project</th></tr>
          </tbody>
        </table>
        <div class="vscroll"><button aria-label="Up"><svg width="9" height="5"><use href="#up"/></svg></button><i class="thumb v2"></i><span class="grow"></span><button aria-label="Down"><svg width="9" height="5"><use href="#down"/></svg></button></div>
      </div>
      <div class="btabs"><button class="on">Properties</button><button>Collaborate</button></div>
    </section>
  </div>
  <aside class="side notes"><span>Notes</span><i class="mark"></i></aside>
</main>

<footer class="status">
  <span>Requirement:REQ011 - Manage User Accounts</span><span>Left:</span><span class="num">238 x Top:</span><span class="num">104 - Width:</span><span class="num">160 x Height:</span><span class="num">33</span>
  <span class="grow"></span>
  <span>All Perspectives</span><i class="vs"></i>
  <svg class="zm" width="8" height="8"><path d="M0 4h8" stroke="#999" stroke-width="2"/></svg>
  <input class="zoom" type="range" min="0" max="100" value="0" aria-label="Zoom">
  <svg class="zp" width="8" height="8"><path d="M0 4h8M4 0v8" stroke="#999" stroke-width="2"/></svg>
  <span class="key">CAP</span><span class="key lit">NUM</span><span class="key">SCRL</span><span class="key">CLOUD</span>
</footer>
</body>
</html>
```
FILE: styles.css
```css
* { box-sizing: border-box; }
html, body { margin: 0; height: 100%; }
body {
  display: flex; flex-direction: column; height: 100vh; overflow: hidden;
  background: #e6e6e6; color: #444;
  font: 11px/16px "Open Sans", "Noto Sans", sans-serif;
}
button, input, select { font: inherit; color: inherit; border: 0; background: none; padding: 0; margin: 0; border-radius: 0; }
button { white-space: nowrap; }
svg { display: block; flex: none; overflow: visible; }
h1, h2, p, ul { margin: 0; padding: 0; }
i, em, b { font-style: normal; font-weight: normal; display: block; }
a { color: inherit; text-decoration: none; }
.sprite { position: absolute; width: 0; height: 0; }
.grow { flex: 1; }
.vs { width: 1px; height: 20px; background: #cfcfcf; flex: none; }

/* title bar */
.titlebar { position: relative; display: flex; height: 60px; background: #567ca7; color: #fff; flex: none; overflow: hidden; }
.waves { position: absolute; right: 0; top: 0; width: 450px; height: 60px; overflow: hidden; }
.tb-left { width: 749px; display: flex; flex-direction: column; justify-content: space-between; }
.caption { display: flex; align-items: center; height: 34px; }
.quick { display: flex; align-items: center; width: 92px; padding-left: 13px; height: 28px; }
.quick .qw { margin: 0 6px 0 10px; }
.quick .more { margin-left: 9px; }
.apptitle { flex: 1; text-align: center; }
.tabs { display: flex; height: 24px; }
.appbtn { display: flex; align-items: center; gap: 5px; width: 60px; padding: 0 0 4px 16px; }
.tab { padding: 0 14px; height: 24px; }
.tab + .tab { margin-left: 1px; }
.tab.on { background: #f0f0f0; color: #35567f; border: 1px solid #d8e4f2; border-bottom: 0; padding: 0 12px; }
.spec { width: 94px; background: #50708f; border-top: 4px solid #86b1ea; display: flex; flex-direction: column; align-items: center; justify-content: space-between; padding-top: 5px; }
.spec span { color: #8ab4e6; padding-left: 6px; }
.tb-right { position: relative; flex: 1; display: flex; flex-direction: column; justify-content: space-between; }
.winctl { display: flex; justify-content: flex-end; gap: 27px; padding: 7px 14px 0 0; }
.winctl button { display: flex; align-items: center; }
.findrow { display: flex; align-items: center; height: 24px; padding: 0 4px 0 20px; }
.find { color: #b3bdcb; margin-left: 13px; }
.persp, .user { display: flex; align-items: center; margin-left: 4px; }
.persp svg { margin: 0 9px 4px 7px; }
.user { color: #b8c5d6; margin-left: 0; }
.user svg:first-child { margin-right: 4px; }
.user svg:last-child { margin: 0 0 4px 6px; }

/* ribbon */
.ribbon { display: flex; flex: none; height: 93px; background: #f0f0f0; border: 1px solid #cfcfcf; border-left: 0; padding-top: 2px; }
.group { display: flex; flex-direction: column; border-right: 1px solid #d2d2d2; padding: 5px 4px 0 8px; height: 87px; }
.group + .group { padding: 5px 4px 0 6px; }
.items { display: flex; height: 58px; }
.big { display: flex; flex-direction: column; align-items: center; justify-content: flex-end; width: 42px; height: 57px; position: relative; padding-bottom: 8px; }
.big > svg:first-child { margin: auto 0; }
.big.wide { width: 61px; }
.big.mid { width: 49px; }
.big .c { position: absolute; bottom: 3px; left: 50%; margin-left: -3px; }
.sep { width: 1px; margin: 0 4px 0 2px; height: 58px; background: #d2d2d2; }
.small { display: flex; flex-direction: column; gap: 6px; padding-left: 4px; width: 86px; }
.small button { display: flex; align-items: center; height: 16px; gap: 5px; }
.small.kan { padding-left: 6px; width: 85px; }
.small.res { width: 84px; color: #5b80ab; padding-left: 3px; }
.small.res button { color: #444; gap: 6px; }
.small.res use { color: #5b80ab; }
.gname { text-align: center; color: #666; line-height: 16px; padding-top: 7px; }

/* breadcrumb bar */
.navbar { display: flex; align-items: center; flex: none; height: 26px; background: #efefef; border-bottom: 1px solid #d6d6d6; }
.grip { width: 2px; height: 15px; margin: 0 6px 0 4px; background: repeating-linear-gradient(#999 0 2px, transparent 2px 4px); }
.round { margin-right: 5px; }
.crumbs { flex: 1; display: flex; align-items: center; gap: 10px; background: #fff; height: 20px; padding-left: 5px; }
.rootlink { padding: 0 2px; }
.go { color: #66668a; margin: 0 9px 0 11px; }
.findpkg { width: 246px; height: 22px; border: 1px solid #bbb; background: #fff; padding: 0 5px; margin-right: 5px; }
.findpkg::placeholder { color: #777; }
.navbar .vs { margin: 0 6px 0 7px; }
.navbar > svg + svg { margin-left: 7px; }
.dark { margin-right: 5px; color: #333; }

/* work area */
.work { flex: 1; display: flex; min-height: 0; }
.side { width: 31px; display: flex; align-items: flex-start; padding-top: 8px; gap: 3px; }
.side span { writing-mode: vertical-rl; width: 16px; line-height: 16px; }
.side .mark { width: 6px; height: 46px; background: #d0d0d0; }
.side.notes { justify-content: flex-end; padding-left: 5px; }
.notes .mark { height: 34px; }
.split { width: 7px; background: #e6e6e6; border-left: 2px solid #dadada; border-right: 1px solid #c9c9c9; }
.panel { display: flex; flex-direction: column; min-width: 0; }
.browser { width: 364px; }
.phead { display: flex; align-items: center; height: 35px; padding: 0 6px 0 4px; color: #666; }
.phead h2 { flex: 1; font-size: 17px; line-height: 24px; font-weight: 400; color: #444; }
.phead svg + svg { margin-left: 11px; }
.ptools { display: flex; align-items: center; height: 24px; background: #efefef; padding: 0 11px 0 5px; color: #777; flex: none; }
.ptools .vs { margin: 0 9px 0 7px; }
.g6 { margin-left: 6px; }
.arr { margin-left: 13px; margin-right: 3px; }
.menu { margin: 0 6px 0 8px; }
.menu2 { margin: 0 9px 0 10px; }
.ptools .far { margin-left: 8px; }
.ptools .c + .g6 { margin-left: 7px; }
.play { color: #8282e0; }
.p2 { margin-left: 11px; }
.ptabs { display: flex; gap: 13px; height: 42px; padding: 7px 6px 0; background: #f0f0f0 linear-gradient(#a6a6a6, #a6a6a6) 0 35px / 100% 1px no-repeat; flex: none; align-items: flex-start; }
.ptabs button { position: relative; height: 16px; }
.ptabs .on { color: #3d5d92; }
.ptabs .on::after { content: ""; position: absolute; left: 50%; top: 24px; width: 8px; height: 8px; margin-left: -4px; background: #f0f0f0; border: 1px solid #a6a6a6; border-right: 0; border-bottom: 0; transform: rotate(45deg); clip-path: polygon(0 0, 100% 0, 0 100%); }
.ptabs.short { height: 34px; padding-top: 4px; background-position: 0 27px; }
.ptabs.short .on::after { top: 19px; }
.tree { flex: 1; background: #fff; list-style: none; overflow: hidden; min-height: 0; }
.tree li { display: flex; align-items: center; height: 20px; white-space: nowrap; padding-left: 10px; }
.tree b { width: 16px; padding: 3px 0 0 1px; flex: none; }
.tree em { width: 25px; padding: 0 0 3px 1px; flex: none; }
.tree .l1 { padding-left: 33px; }
.tree .l2 { padding-left: 56px; }
.tree .l3 { padding-left: 79px; }
.tree .l4 { padding-left: 102px; }
.tree .sel { background: #efefef; }
.trace .tree em { width: 21px; padding-left: 0; }

/* diagram area */
.center { flex: 1; display: flex; flex-direction: column; min-width: 0; }
.dhead { display: flex; align-items: center; height: 28px; padding: 1px 8px 0 6px; border-bottom: 1px solid #cbcbcb; color: #666; flex: none; }
.dicon { margin: 0 21px 0 29px; }
.dhead .k { color: #111; margin-left: 20px; }
.dhead .k + .k { margin-left: 14px; }
.dtabs { display: flex; align-items: flex-end; height: 28px; border-bottom: 1px solid #c4c4c4; padding-right: 7px; flex: none; color: #888; }
.dtabs > svg { margin-bottom: 10px; }
.dtabs .sc { margin-left: 12px; }
.dtabs button { display: flex; align-items: center; font-size: 17px; line-height: 24px; height: 26px; color: #444; padding: 1px 11px 0 3px; gap: 2px; }
.dtabs .on { background: #fff; border: 1px solid #a8a8a8; border-bottom: 0; padding: 1px 10px 0 4px; }
.dtabs .cl { color: #777; margin-left: 17px; }
.dtools { display: flex; align-items: center; height: 27px; background: #efefef; padding: 0 4px 3px 1px; flex: none; }
.t { width: 22px; height: 18px; display: flex; align-items: center; justify-content: center; flex: none; }
.t.a { width: 25px; padding-right: 3px; }
.cr { width: 10px; height: 18px; display: flex; align-items: center; justify-content: center; color: #777; }
.pair { display: flex; margin-right: 3px; }
.dtools .vs { margin: 0 5px 0 2px; }
.spin { display: flex; align-items: center; width: 45px; height: 18px; background: #fff; border: 1px solid #bbb; margin-right: 5px; padding-right: 6px; }
.spin input { flex: 1; width: 20px; padding-left: 3px; }
.style { appearance: none; width: 145px; height: 21px; border: 1px solid #bbb; padding: 0 4px; margin-right: 5px; background: linear-gradient(45deg, transparent 50%, #777 50%) 134px 8px / 3px 3px no-repeat, linear-gradient(-45deg, transparent 50%, #777 50%) 137px 8px / 3px 3px no-repeat, #fff; }
.filter { width: 116px; height: 18px; border: 1px solid #bbb; background: #fff; margin-right: 3px; }
.ovf { align-self: flex-end; }
.view { flex: 1; display: grid; grid-template-columns: minmax(0, 1fr) 17px; grid-template-rows: minmax(0, 1fr) 17px; min-height: 0; padding-bottom: 1px; }
.canvas { position: relative; overflow: hidden; background: linear-gradient(#fff, #e6e2e0 44%, #dedcd8 55%, #d5d2cb 73%, #c6c0bb); }
.canvas h1 { position: absolute; left: 13px; top: 15px; font: 700 34px/44px Lato, "Open Sans", sans-serif; color: #000080; white-space: nowrap; }
.hatch { position: absolute; left: 290px; top: 123px; }
.node { position: absolute; width: 200px; height: 42px; border: 1px solid #000; background: linear-gradient(90deg, #f3fcf3 20%, #d9f2d4); box-shadow: 2px 2px 0 #b9b4b1; color: #000; font: 700 12px/16px Lato, "Open Sans", sans-serif; padding: 6px 0 0 20px; white-space: nowrap; }
.node::before { content: ""; position: absolute; left: 11px; top: 0; bottom: 0; width: 4px; border: 1px solid #000; border-width: 0 1px; }
.strong { background: linear-gradient(90deg, #c9f2c9, #abe8ab); }
.low { height: 39px; }
.n011 { left: 297px; top: 130px; box-shadow: none; padding-top: 5px; }
.n018 { left: 147px; top: 316px; }
.n024 { left: 297px; top: 441px; }
.n617 { left: 622px; top: 316px; }
.n616 { left: 897px; top: 316px; }
.device { position: absolute; left: 440px; top: 279px; width: 118px; height: 116px; color: #555; }
.device p { position: absolute; left: 0; top: 18px; width: 104px; text-align: center; font: 12px/16px Lato, "Open Sans", sans-serif; }
.device strong { display: block; }
.links { position: absolute; left: 0; top: 0; }
.vscroll { display: flex; flex-direction: column; width: 17px; background: #e6e6e6; }
.vscroll button, .hscroll button { width: 17px; height: 17px; flex: none; background: #fff; border: 1px solid #bdbdbd; display: flex; align-items: center; justify-content: center; color: #666; }
.thumb { background: #fff; border: 1px solid #bdbdbd; }
.v1 { height: 291px; }
.v2 { height: 228px; }
.hscroll { display: flex; height: 17px; background: #e6e6e6; flex: none; }
.track { flex: 1; display: flex; }
.h1 { width: 69.5%; }
.h2 { width: 98%; }

/* right column */
.right { width: 313px; display: flex; flex-direction: column; flex: none; }
.trace { flex: 1; min-height: 0; border-bottom: 6px solid #cbcbcb; }
.props { flex: none; }
.pbody { display: flex; }
.ptable { flex: 1; border-collapse: collapse; background: #fff; table-layout: fixed; width: 296px; }
.c1 { width: 17px; }
.c2 { width: 123px; }
.ptable td, .ptable th { height: 19px; padding: 0 0 0 5px; line-height: 16px; text-align: left; font-weight: 400; white-space: nowrap; }
.ptable th { padding-left: 4px; }
.ptable .gut { background: #efefef; padding: 0 0 0 6px; }
.ptable .gut svg { opacity: .5; }
.ptable .sec th { font-weight: 700; background: #efefef; }
.ptable .cur th { background: #eee; }
.ptable input { appearance: none; display: block; width: 11px; height: 11px; border: 1px solid #999; background: #fff; margin-left: -1px; }
.ptable input:disabled { border-color: #ccc; }
.btabs { display: flex; align-items: flex-start; height: 23px; border-top: 1px solid #c4c4c4; }
.btabs button { height: 21px; padding: 0 3px 2px 4px; border-bottom: 3px solid #fbd978; margin-left: 3px; }
.btabs .on { background: #fff; border: 1px solid #aaa; border-top: 0; box-shadow: inset 0 -3px #c4d3f2; height: 22px; margin-left: 0; padding: 0 4px 4px; }

/* status bar */
.status { display: flex; align-items: center; flex: none; height: 24px; background: #f0f0f0; border-top: 1px solid #c9c9c9; padding: 0 12px 1px 2px; }
.status > span + span { margin-left: 9px; }
.status .num { margin-left: 12px; }
.status .vs { height: 9px; margin: 0 21px 0 24px; }
.zoom { appearance: none; width: 90px; height: 15px; margin: 0 10px 0 8px; background: linear-gradient(#aaa, #aaa) 0 7px / 100% 1px no-repeat; }
.zoom::-webkit-slider-thumb { appearance: none; width: 5px; height: 14px; background: #e6e6e6; border: 1px solid #999; }
.status .key { color: #aaa; margin-left: 19px; }
.status .zp + .key { margin-left: 15px; }
.status .key.lit { color: #444; }
```
